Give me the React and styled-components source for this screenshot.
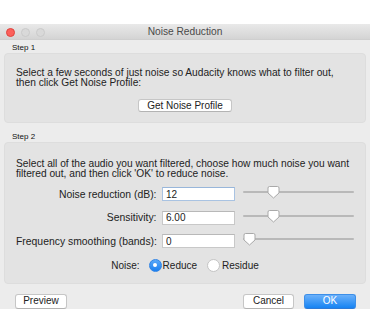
import React from "react";
import styled, { createGlobalStyle } from "styled-components";

const Global = createGlobalStyle`
  html, body { margin: 0; padding: 0; background: #ffffff; }
  body { font-family: "Liberation Sans", Arial, sans-serif; color: #222; }
  * { box-sizing: border-box; }
`;

const Page = styled.div`
  width: 370px;
  height: 333px;
  padding-top: 24px;
  background: #fff;
  overflow: hidden;
`;

const Window = styled.div`
  width: 370px;
  height: 285px;
  background: #ececec;
  overflow: hidden;
  display: flex;
  flex-direction: column;
`;

const TitleBar = styled.div`
  height: 16px;
  flex: none;
  display: grid;
  grid-template-columns: 1fr auto 1fr;
  align-items: center;
  background: linear-gradient(#e9e9e9, #d4d4d4);
  border-bottom: 1px solid #cfcfcf;
`;

const Lights = styled.div`
  display: flex;
  gap: 6px;
  padding-left: 6px;
`;

const Light = styled.span`
  width: 9px;
  height: 9px;
  border-radius: 50%;
  background: ${(p) => (p.$red ? "#fc605b" : "#d9d9d9")};
  border: 1px solid ${(p) => (p.$red ? "#e0443e" : "#cacaca")};
`;

const Title = styled.div`
  font-size: 10.2px;
  color: #4a4a4a;
  line-height: 16px;
`;

const Content = styled.div`
  padding: 0 4px;
`;

const StepLabel = styled.div`
  font-size: 8px;
  line-height: 11px;
  height: 13px;
  padding: 2px 0 0 8px;
  margin-top: ${(p) => p.$top || 0}px;
  color: #111;
`;

const Group = styled.div`
  background: #e3e3e3;
  border: 1px solid #dddddd;
  border-radius: 4px;
  padding: ${(p) => p.$pt}px 11px ${(p) => p.$pb}px 11px;
`;

const Para = styled.p`
  margin: 0;
  font-size: 10.2px;
  line-height: 10px;
  color: #222;
  white-space: nowrap;
`;

const Center = styled.div`
  display: flex;
  justify-content: center;
  margin-top: ${(p) => p.$top}px;
`;

const Button = styled.button`
  height: ${(p) => p.$h || 14}px;
  width: ${(p) => p.$w}px;
  padding: 0;
  font-family: "Liberation Sans", Arial, sans-serif;
  font-size: 10px;
  color: ${(p) => (p.$primary ? "#fff" : "#222")};
  background: ${(p) =>
    p.$primary ? "linear-gradient(#6bb1fa, #1683f3)" : "#ffffff"};
  border: 1px solid ${(p) => (p.$primary ? "#3d8fe8" : "#c6c6c6")};
  border-bottom-color: ${(p) => (p.$primary ? "#2f7ad6" : "#b3b3b3")};
  border-radius: 3px;
  line-height: 12px;
`;

const Form = styled.div`
  display: grid;
  grid-template-columns: 146px 80px 112px;
  row-gap: 9.5px;
  grid-auto-rows: 14px;
  margin-top: 8px;
  align-items: center;
`;

const FieldLabel = styled.label`
  font-size: 10.4px;
  text-align: right;
  padding-right: 5.5px;
  color: #222;
  white-space: nowrap;
`;

const Field = styled.input`
  width: 73px;
  height: 14px;
  padding: 0 0 0 3px;
  font-family: "Liberation Sans", Arial, sans-serif;
  font-size: 10px;
  color: #222;
  background: #fff;
  border: 1px solid ${(p) => (p.$focus ? "#a9c3e2" : "#c8c8c8")};
  border-top-color: ${(p) => (p.$focus ? "#98b6da" : "#b8b8b8")};
  outline: none;
`;

const SliderBox = styled.div`
  position: relative;
  height: 14px;
`;

const Track = styled.div`
  position: absolute;
  left: 1px;
  right: 0;
  top: 4px;
  height: 2px;
  border-radius: 1px;
  background: #b9b9b9;
`;

const ThumbSvg = styled.svg`
  position: absolute;
  top: -1px;
  width: 13px;
  height: 13px;
`;

const RadioRow = styled.div`
  display: flex;
  justify-content: center;
  align-items: center;
  margin-top: 10.5px;
  height: 13px;
  font-size: 10px;
  color: #222;
`;

const RadioLabel = styled.span`
  margin-right: ${(p) => p.$mr || 0}px;
  margin-left: ${(p) => p.$ml || 0}px;
`;

const RadioDot = styled.span`
  width: 13px;
  height: 13px;
  border-radius: 50%;
  display: inline-flex;
  align-items: center;
  justify-content: center;
  background: ${(p) => (p.$on ? "linear-gradient(#5aa8f8, #1a7ff0)" : "#fff")};
  border: 1px solid ${(p) => (p.$on ? "#2f84e6" : "#c4c4c4")};
  &::after {
    content: "";
    display: ${(p) => (p.$on ? "block" : "none")};
    width: 4px;
    height: 4px;
    border-radius: 50%;
    background: #fff;
  }
`;

const Footer = styled.div`
  display: flex;
  align-items: center;
  padding: 10px 14px 0 15px;
  gap: 10px;
`;

const Spacer = styled.div`
  flex: 1;
`;

function Slider({ pos }) {
  return (
    <SliderBox>
      <Track />
      <ThumbSvg viewBox="0 0 13 13" style={{ left: pos }}>
        <path
          d="M2.5 0.5 H10.5 Q12 0.5 12 2 V7 L6.5 12 L1 7 V2 Q1 0.5 2.5 0.5 Z"
          fill="#ffffff"
          stroke="#a9a9a9"
          strokeWidth="1"
        />
      </ThumbSvg>
    </SliderBox>
  );
}

const rows = [
  { label: "Noise reduction (dB):", value: "12", pos: 25, focus: true },
  { label: "Sensitivity:", value: "6.00", pos: 25 },
  { label: "Frequency smoothing (bands):", value: "0", pos: 1 },
];

export default function App() {
  return (
    <>
      <Global />
      <Page>
        <Window>
          <TitleBar>
            <Lights>
              <Light $red />
              <Light />
              <Light />
            </Lights>
            <Title>Noise Reduction</Title>
            <div />
          </TitleBar>
          <Content>
            <StepLabel>Step 1</StepLabel>
            <Group $pt={14} $pb={10}>
              <Para>
                Select a few seconds of just noise so Audacity knows what to filter out,
                <br />
                then click Get Noise Profile:
              </Para>
              <Center $top={11}>
                <Button $w={94} $h={13}>Get Noise Profile</Button>
              </Center>
            </Group>
            <StepLabel $top={6}>Step 2</StepLabel>
            <Group $pt={16} $pb={11}>
              <Para>
                Select all of the audio you want filtered, choose how much noise you want
                <br />
                filtered out, and then click 'OK' to reduce noise.
              </Para>
              <Form>
                {rows.map((r) => (
                  <React.Fragment key={r.label}>
                    <FieldLabel>{r.label}</FieldLabel>
                    <Field readOnly value={r.value} $focus={r.focus} />
                    <Slider pos={r.pos} />
                  </React.Fragment>
                ))}
              </Form>
              <RadioRow>
                <RadioLabel $mr={9}>Noise:</RadioLabel>
                <RadioDot $on />
                <RadioLabel $ml={1} $mr={10}>Reduce</RadioLabel>
                <RadioDot />
                <RadioLabel $ml={2}>Residue</RadioLabel>
              </RadioRow>
            </Group>
          </Content>
          <Footer>
            <Button $w={52} $h={15}>Preview</Button>
            <Spacer />
            <Button $w={51} $h={15}>Cancel</Button>
            <Button $w={52} $h={15} $primary>OK</Button>
          </Footer>
        </Window>
      </Page>
    </>
  );
}
